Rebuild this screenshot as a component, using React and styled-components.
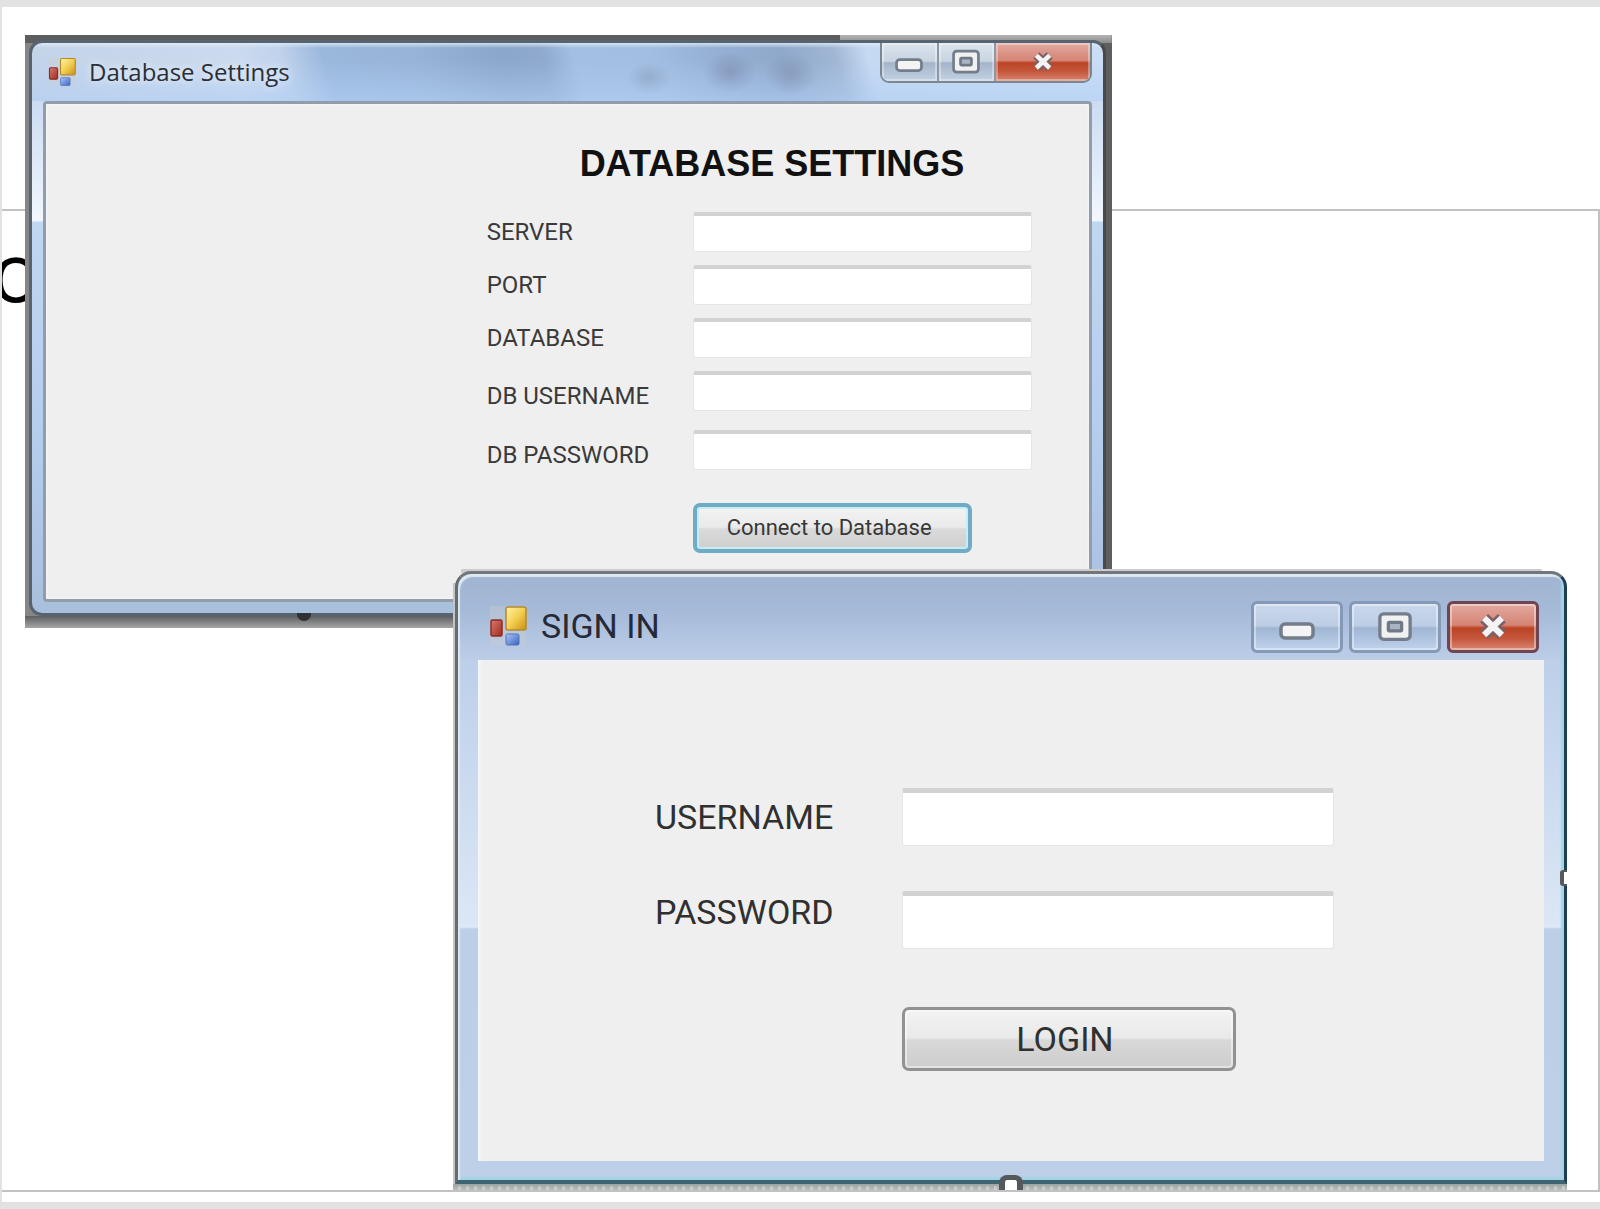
import React from 'react';
import styled, { createGlobalStyle, css } from 'styled-components';

const uiFont = 'Roboto, "Liberation Sans", sans-serif';

const GlobalStyle = createGlobalStyle`
  * { box-sizing: border-box; }
  body { margin: 0; background: #e2e2e2; font-family: "Liberation Sans", sans-serif; }
`;

const Page = styled.div`
  display: flex;
  min-height: 100vh;
  padding: 7px 0 7px 2px;
  overflow: hidden;
`;

const Sheet = styled.main`
  position: relative;
  display: flex;
  flex: 1;
  flex-direction: column;
  padding: 202px 0 10px;
  background: #ffffff;
`;

const Cell = styled.section`
  flex: 1;
  padding-top: 17px;
  overflow: hidden;
  border: 2px solid #c2c2c2;
  border-left: 0;
`;

const CellText = styled.p`
  margin: 0;
  font-family: "Open Sans", sans-serif;
  font-size: 83px;
  line-height: 84px;
  text-indent: -11px;
  color: #000000;
`;

const Handle = styled.span`
  position: absolute;
  background: ${({ fill }) => fill || '#ffffff'};
  border: 4px solid #55595c;
  ${({ side }) => side === 'right' && css`
    right: 0;
    top: 301px;
    width: 7px;
    height: 16px;
    border-width: 2px 0 2px 4px;
    border-radius: 3px 0 0 3px;
  `}
  ${({ side }) => side === 'bottom' && css`
    left: 49%;
    bottom: 0;
    width: 24px;
    height: 15px;
    border-width: 5px 6px 0;
    border-radius: 8px 8px 0 0;
  `}
  ${({ side }) => side === 'under' && css`
    left: 25%;
    bottom: 7px;
    width: 14px;
    height: 7px;
    border-color: #2f3133;
    border-radius: 0 0 7px 7px;
  `}
`;

/* ---- Database Settings window ---- */

const SettingsShell = styled.section`
  position: absolute;
  top: 28px;
  left: 23px;
  width: 68%;
  padding: 5px 6px 12px 4px;
  background:
    linear-gradient(#5c5e60, #5c5e60) 0 0 / 75% 8px no-repeat,
    linear-gradient(#b4b4b4, #8c8c8c) 100% 0 / 25% 8px no-repeat,
    linear-gradient(#5c5e60, #a6a6a6) 0 100% / 100% 12px no-repeat,
    linear-gradient(90deg, #868686, #6c6c6c 50%, #5e5e5e);
`;

const SettingsFrame = styled.div`
  padding: 0 11px 11px;
  border: 3px solid #566370;
  border-right-color: #47494c;
  border-radius: 13px;
  background:
    radial-gradient(ellipse at center, rgba(110, 125, 155, 0.3), transparent 70%) 58% 18px / 46px 34px no-repeat,
    radial-gradient(ellipse at center, rgba(110, 118, 155, 0.4), transparent 70%) 66% 8px / 54px 42px no-repeat,
    radial-gradient(ellipse at center, rgba(110, 118, 150, 0.35), transparent 70%) 72% 10px / 54px 42px no-repeat,
    linear-gradient(rgba(225, 236, 248, 0.8), transparent 5px) 0 0 / 100% 58px no-repeat,
    linear-gradient(transparent 30%, rgba(178, 208, 246, 0.6)) 0 0 / 100% 58px no-repeat,
    linear-gradient(75deg, #c3d3e8 0, #cbdaee 20%, #c0d3ec 24%, #9ab7dc 28%, #98b4d8 36%, #8ba7ca 44%, #8ea9cc 48%, #a3bfe2 51%, #a2bee0 58%, #95b0d3 64%, #8fa9cb 70%, #a0b6d4 75%, #c6d9f2 78%, #cbddf4) 0 0 / 100% 58px no-repeat,
    linear-gradient(#cbdcf2 58px, #f1f7fd 177px, #edf5fd 178px, #c0d7f2 179px, #b4cdec 400px, #a9c0dd);
`;

const SettingsBar = styled.header`
  display: flex;
  align-items: flex-start;
  justify-content: space-between;
  height: 58px;
`;

const SettingsTitle = styled.h1`
  display: flex;
  align-items: center;
  gap: 13px;
  margin: 0;
  padding: 11px 0 0 5px;
  font: 400 24px/36px "Open Sans", sans-serif;
  color: #2a2e38;
  text-shadow: 0 0 8px #ffffff;
`;

const SettingsClient = styled.div`
  padding: 40px 57px 46px 20px;
  border: 3px solid #919dab;
  border-radius: 4px;
  background: #efefef;
  box-shadow: inset 0 0 3px #ffffff;
`;

const SettingsForm = styled.form`
  width: min(545px, 100%);
  margin-left: auto;
`;

const Heading = styled.h2`
  margin: 0 0 28px;
  padding-left: 93px;
  font-size: 36px;
  line-height: 40px;
  white-space: nowrap;
  color: #111111;
`;

const SettingsRow = styled.div`
  display: grid;
  grid-template-columns: 206px 1fr;
  align-items: ${({ low }) => (low ? 'end' : 'center')};
  margin-bottom: ${({ gap }) => gap || 13}px;
`;

const SettingsLabel = styled.label`
  font: 400 24px/30px ${uiFont};
  color: #3a3a3a;
`;

const TextBox = styled.input`
  width: 100%;
  height: ${({ large }) => (large ? 58 : 40)}px;
  padding: 4px 8px;
  border: 1px solid #e4e6e8;
  border-top: ${({ large }) => (large ? 5 : 4)}px solid #d2d2d2;
  border-radius: 3px;
  outline: 0;
  background: #ffffff;
  font: 400 ${({ large }) => (large ? 34 : 24)}px ${uiFont};
`;

const ConnectButton = styled.button`
  width: 279px;
  height: 50px;
  margin: 20px 0 0 206px;
  padding: 0 6px 0 0;
  border: 4px solid #6fabc5;
  border-radius: 7px;
  background: linear-gradient(#f3f3f3 0, #eaeaea 48%, #dadada 52%, #cfcfcf);
  box-shadow: inset 0 0 0 2px #c5ecf7;
  font: 400 22px/34px ${uiFont};
  color: #383838;
`;

const CaptionGroup = styled.div`
  display: flex;
  width: 212px;
  height: 40px;
  overflow: hidden;
  border: 2px solid #7c8794;
  border-top: 0;
  border-radius: 0 0 9px 9px;
`;

const silver = 'linear-gradient(#dbe4ee 0, #c9d4e1 48%, #a5b5c9 52%, #c2d1e4)';
const glass = 'linear-gradient(#c9d8ec 0, #bccde4 48%, #9fb5d2 52%, #bfd3ec)';
const red = 'linear-gradient(#e3aaa0 0, #d58474 46%, #bb4325 52%, #c4573b 75%, #d98672)';

const GroupButton = styled.button`
  display: grid;
  flex: ${({ wide }) => (wide ? '0 0 96px' : 1)};
  place-items: center;
  padding: 0;
  border: 0;
  border-left: ${({ first }) => (first ? 0 : 2)}px solid #8d98a6;
  background: ${({ close }) => (close ? red : silver)};
  box-shadow: inset 0 0 0 2px rgba(255, 255, 255, 0.35);
`;

/* ---- Sign in window ---- */

const SignInShell = styled.section`
  position: absolute;
  top: 562px;
  left: 451px;
  right: 33px;
  padding: 2px 0 6px 2px;
  background:
    repeating-linear-gradient(90deg, transparent 0 5px, rgba(255, 255, 255, 0.3) 5px 8px) 0 100% / 100% 4px no-repeat,
    linear-gradient(#9ba3a3, #bcbfbe) 0 100% / 100% 6px no-repeat,
    linear-gradient(#cccccc, #cccccc) 8px 0 / 97% 4px no-repeat,
    linear-gradient(#c4c4c4, #c4c4c4) 0 14px / 4px 100% no-repeat;
`;

const SignInFrame = styled.div`
  padding: 0 20px 19px;
  border: 3px solid;
  border-color: #73777b #1f3e50 #3d6470 #686c6f;
  border-bottom-width: 4px;
  border-radius: 16px 16px 0 0;
  background:
    linear-gradient(#a0b4d1, #a5bad8 40%, #bccde8) 0 0 / 100% 86px no-repeat,
    linear-gradient(#bdcfe9 86px, #dbe7f6 350px, #dfe9f5 353px, #bdcfe7 355px, #bdd0e8);
  box-shadow: inset 2px 3px 1px #dce8f2, inset -3px -3px 2px #a3d3e6;
`;

const SignInBar = styled.header`
  display: flex;
  align-items: flex-start;
  justify-content: space-between;
  height: 86px;
  padding: 27px 5px 0 11px;
`;

const SignInTitle = styled.h1`
  display: flex;
  align-items: center;
  gap: 14px;
  margin: 0;
  font: 400 34px/50px ${uiFont};
  color: #262a36;
`;

const CaptionRow = styled.div`
  display: flex;
  gap: 6px;
`;

const CaptionButton = styled.button`
  display: grid;
  place-items: center;
  width: 92px;
  height: 52px;
  padding: 0;
  border: 3px solid ${({ close }) => (close ? '#6f4453' : '#8499b5')};
  border-radius: 6px;
  background: ${({ close }) => (close ? red : glass)};
  box-shadow: inset 0 0 0 2px rgba(255, 255, 255, 0.4);
`;

const SignInForm = styled.form`
  padding: 128px 210px 90px 177px;
  background: #efefef;
  box-shadow: inset 3px 0 3px #f3f6fa;
`;

const SignInRow = styled.div`
  display: grid;
  grid-template-columns: 247px 1fr;
  align-items: ${({ high }) => (high ? 'start' : 'center')};
  margin-bottom: ${({ gap }) => gap}px;
`;

const SignInLabel = styled.label`
  font: 400 34px/42px ${uiFont};
  color: #303030;
`;

const LoginButton = styled.button`
  display: block;
  width: 334px;
  height: 64px;
  margin-left: 247px;
  padding: 0 8px 0 0;
  border: 3px solid #929292;
  border-radius: 7px;
  background: linear-gradient(#f3f3f3 0, #e9e9e9 48%, #d8d8d8 52%, #cdcdcd);
  box-shadow: inset 0 0 0 2px rgba(255, 255, 255, 0.45);
  font: 400 34px/56px ${uiFont};
  color: #303030;
`;

const FormIcon = ({ id, width, height }) => (
  <svg width={width} height={height} viewBox="0 0 38 42" preserveAspectRatio="none" aria-hidden="true">
    <defs>
      <linearGradient id={`${id}-y`} x1="0" y1="0" x2="1" y2="1">
        <stop offset="0" stopColor="#fff3a8" />
        <stop offset="0.5" stopColor="#f3cf50" />
        <stop offset="1" stopColor="#c98f14" />
      </linearGradient>
      <linearGradient id={`${id}-b`} x1="0" y1="0" x2="1" y2="1">
        <stop offset="0" stopColor="#a9c6fa" />
        <stop offset="1" stopColor="#3a63bd" />
      </linearGradient>
      <linearGradient id={`${id}-r`} x1="0" y1="0" x2="1" y2="1">
        <stop offset="0" stopColor="#d9796c" />
        <stop offset="1" stopColor="#a02c20" />
      </linearGradient>
    </defs>
    <rect x="1" y="1" width="36" height="39" fill="#cfcfcf" opacity="0.35" />
    <rect x="17" y="2" width="20" height="23" rx="2" fill={`url(#${id}-y)`} stroke="#b58a2a" strokeWidth="1.5" />
    <rect x="2" y="15" width="11" height="16" rx="1.5" fill={`url(#${id}-r)`} stroke="#8c2b26" strokeWidth="1.5" />
    <rect x="17" y="29" width="13" height="11" rx="1.5" fill={`url(#${id}-b)`} stroke="#5273b8" strokeWidth="1" />
  </svg>
);

const MinimizeIcon = ({ width }) => (
  <svg width={width} height={width} viewBox="0 0 36 36" aria-hidden="true">
    <rect x="2" y="15" width="32" height="14" rx="4" fill="#f4f4f4" stroke="#737d8c" strokeWidth="3.5" />
  </svg>
);

const MaximizeIcon = ({ width }) => (
  <svg width={width} height={width} viewBox="0 0 36 36" aria-hidden="true">
    <rect x="2" y="4" width="32" height="27" rx="4" fill="#f1f1f1" stroke="#737d8c" strokeWidth="3.5" />
    <rect x="11" y="13" width="14" height="9" rx="1" fill="#a9b5c4" stroke="#6f7988" strokeWidth="3.5" />
  </svg>
);

const CloseIcon = ({ width }) => (
  <svg width={width} height={width} viewBox="0 0 36 36" fill="none" aria-hidden="true">
    <path d="M8 8l20 19M28 8L8 27" stroke="#7b6268" strokeWidth="13" />
    <path d="M8 8l20 19M28 8L8 27" stroke="#f5f3f3" strokeWidth="7" />
  </svg>
);

const settingsFields = [
  { id: 'server', label: 'SERVER' },
  { id: 'port', label: 'PORT' },
  { id: 'database', label: 'DATABASE' },
  { id: 'db-username', label: 'DB USERNAME', low: true, gap: 19 },
  { id: 'db-password', label: 'DB PASSWORD', low: true, type: 'password' },
];

const renderField = ({ id, label, low, gap, type = 'text' }) => (
  <SettingsRow key={id} low={low} gap={gap}>
    <SettingsLabel htmlFor={id}>{label}</SettingsLabel>
    <TextBox id={id} type={type} />
  </SettingsRow>
);

const stop = e => e.preventDefault();

const DatabaseSettings = () => (
  <SettingsShell>
    <SettingsFrame>
      <SettingsBar>
        <SettingsTitle>
          <FormIcon id="db" width={28} height={30} />
          Database Settings
        </SettingsTitle>
        <CaptionGroup>
          <GroupButton type="button" first aria-label="Minimize"><MinimizeIcon width={28} /></GroupButton>
          <GroupButton type="button" aria-label="Maximize"><MaximizeIcon width={28} /></GroupButton>
          <GroupButton type="button" wide close aria-label="Close"><CloseIcon width={24} /></GroupButton>
        </CaptionGroup>
      </SettingsBar>
      <SettingsClient>
        <SettingsForm onSubmit={stop}>
          <Heading>DATABASE SETTINGS</Heading>
          {settingsFields.map(renderField)}
          <ConnectButton type="submit">Connect to Database</ConnectButton>
        </SettingsForm>
      </SettingsClient>
    </SettingsFrame>
    <Handle side="under" fill="#2f3133" />
  </SettingsShell>
);

const SignIn = () => (
  <SignInShell>
    <SignInFrame>
      <SignInBar>
        <SignInTitle>
          <FormIcon id="si" width={38} height={42} />
          SIGN IN
        </SignInTitle>
        <CaptionRow>
          <CaptionButton type="button" aria-label="Minimize"><MinimizeIcon width={36} /></CaptionButton>
          <CaptionButton type="button" aria-label="Maximize"><MaximizeIcon width={34} /></CaptionButton>
          <CaptionButton type="button" close aria-label="Close"><CloseIcon width={32} /></CaptionButton>
        </CaptionRow>
      </SignInBar>
      <SignInForm onSubmit={stop}>
        <SignInRow gap={45}>
          <SignInLabel htmlFor="username">USERNAME</SignInLabel>
          <TextBox large id="username" type="text" />
        </SignInRow>
        <SignInRow high gap={58}>
          <SignInLabel htmlFor="password">PASSWORD</SignInLabel>
          <TextBox large id="password" type="password" />
        </SignInRow>
        <LoginButton type="submit">LOGIN</LoginButton>
      </SignInForm>
    </SignInFrame>
    <Handle side="right" />
    <Handle side="bottom" />
  </SignInShell>
);

const App = () => (
  <>
    <GlobalStyle />
    <Page>
      <Sheet>
        <Cell>
          <CellText>o</CellText>
        </Cell>
        <DatabaseSettings />
        <SignIn />
      </Sheet>
    </Page>
  </>
);

export default App;
